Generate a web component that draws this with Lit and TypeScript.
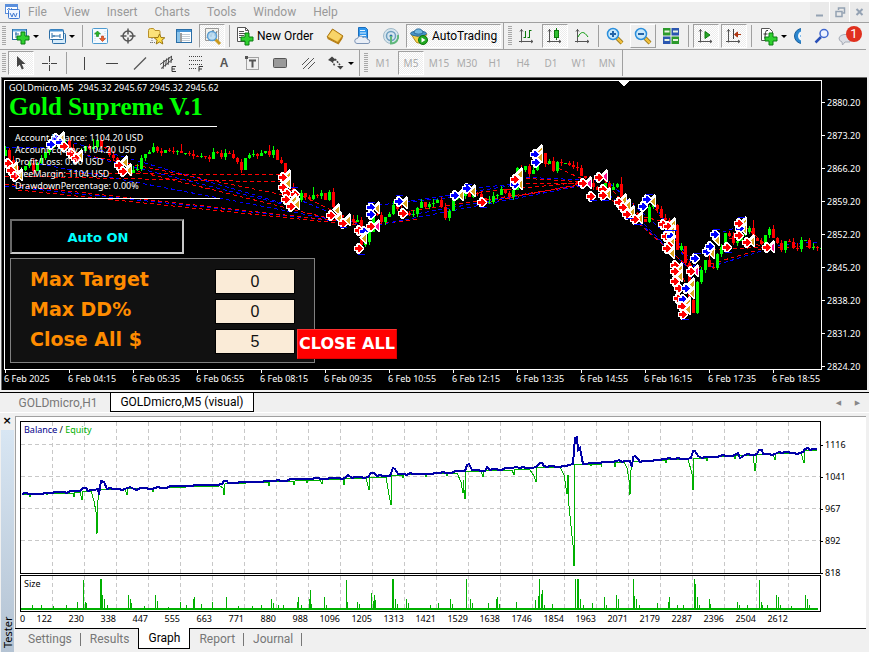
import { LitElement, html, css, svg, nothing, TemplateResult } from "lit";
import { customElement, state } from "lit/decorators.js";
import { classMap } from "lit/directives/class-map.js";

/* ---------- icons: every glyph is drawn in a 20 x 20 box ---------- */

const plus = (x: number, y: number) => svg`
  <path d="M${x + 4} ${y}h4v4h4v4h-4v4h-4v-4h-4v-4h4z" fill="#2fd02f" stroke="#0b7d12" stroke-width="1"/>`;
const axes = svg`<path d="M4.500 3v13.500M2 15.500h14M3 5.500l1.500-2 1.500 2M14 14l2 1.500-2 1.500" fill="none" stroke="#555" />`;
const lens = (sign: string) => svg`
  <path d="M12 12l5 5" stroke="#8a6a10" stroke-width="4"/><path d="M12 12l5 5" stroke="#f0c040" stroke-width="2.500"/>
  <circle cx="8" cy="8" r="5.500" fill="#c9e9fc" stroke="#2b8fdc" stroke-width="1.500"/>
  <path d="${sign}" stroke="#2464a8" stroke-width="2"/>`;

const ICONS: Record<string, TemplateResult> = {
  app: svg`<rect x="3.500" y="2.500" width="12" height="9" fill="#fff" stroke="#5b8fdc"/><path d="M4 4h11" stroke="#5b8fdc" stroke-width="2"/>
    <rect x="6.500" y="7.500" width="11" height="9" rx="1" fill="#eef5ff" stroke="#3f78d0"/><path d="M8 11l2 4 1.500-4 2 4 1.500-4" fill="none" stroke="#3f78d0"/><path d="M5 8l2-2 1 2 2-2" fill="none" stroke="#5b8fdc"/>`,
  newChart: svg`<rect x="1.500" y="3.500" width="14" height="10" fill="#fff" stroke="#2b6ea6"/><path d="M2 4.500h13" stroke="#66aee4" stroke-width="2"/><path d="M4 8h4M5 6v4M4 11h5" stroke="#2b6ea6"/>${plus(6, 6)}`,
  profiles: svg`<rect x="5.500" y="7.500" width="13" height="10" rx="1" fill="#d7ecfb" stroke="#2b6ea6"/><rect x="2.500" y="3.500" width="14" height="10" rx="1" fill="#fff" stroke="#2b6ea6"/><path d="M3 4.500h13" stroke="#4795d6" stroke-width="2"/><path d="M5 7v5M5 10h8M13 8v4M7 9v2" stroke="#2b6ea6"/>`,
  market: svg`<rect x="2.500" y="2.500" width="15" height="15" rx="1" fill="#f4faff" stroke="#4c9ad0"/><path d="M5 6v9M15 5v9" stroke="#c9d8e4" stroke-dasharray="1 1"/><path d="M7.500 5l3 3h-2v2.500h-2v-2.500h-2z" fill="#27b527" stroke="#0b7d12" stroke-width=".6"/><path d="M12.500 15.500l3-3h-2v-2.500h-2v2.500h-2z" fill="#f0602a" stroke="#b03510" stroke-width=".6"/>`,
  cross: svg`<circle cx="10" cy="10" r="5" fill="none" stroke="#555" stroke-width="1.500"/><path d="M10 2.500v6M10 11.500v6M2.500 10h6M11.500 10h6" stroke="#555" stroke-width="1.500"/>`,
  navigator: svg`<path d="M2.500 4.500q0-2 2-2h3l1.500 2h4q1 0 1 1v6h-11.500z" fill="#fbe27a" stroke="#b8902a"/><path d="M6 12v5M4 16.500h5" stroke="#777" stroke-dasharray="1 1"/><path d="M13.500 8l1.500 3.500 3.800.3-2.900 2.400.9 3.800-3.300-2-3.300 2 .9-3.800-2.900-2.400 3.800-.3z" fill="#ffdf4a" stroke="#9a7510"/>`,
  terminal: svg`<rect x="2.500" y="3.500" width="15" height="13" fill="#fff" stroke="#2b6ea6"/><path d="M3 5h14" stroke="#4795d6" stroke-width="2"/><path d="M4.500 6v10" stroke="#8cc4ea" stroke-width="3"/><path d="M8 8.500h8M8 10.500h8M8 12.500h8M8 14.500h8" stroke="#c3ccd4"/><path d="M7 7v9" stroke="#3c3c3c"/>`,
  tester: svg`<path d="M3.500 2.500h13v12h-13z" fill="#f3f3ee" stroke="#999"/><path d="M5 12l2-6 2 5 2-7 2 6 2-5" fill="none" stroke="#777"/><path d="M13 13l5 5" stroke="#c99a20" stroke-width="3"/><circle cx="10" cy="10" r="4.500" fill="#b7dcf4" fill-opacity=".85" stroke="#5b9fd4" stroke-width="1.500"/>`,
  order: svg`<path d="M2.500 1.500h8l3 3v11h-11z" fill="#fff" stroke="#555"/><path d="M10.500 1.500v3h3" fill="none" stroke="#555"/><path d="M4 5.500h5M4 7.500h7M4 9.500h5M4 11.500h4" stroke="#555"/>${plus(6, 7)}`,
  gold: svg`<path d="M2 11l5.500-8 10.500 7-5 7z" fill="#e2a92c" stroke="#a87512"/><path d="M3 10.500l4.800-6.500 9 6-4.500 5.500z" fill="#f8d469"/><path d="M2.500 11.500l10.500 5.500 4.500-6.500v2L13.500 18.500 2.500 13z" fill="#b87f14"/>`,
  cloudDoc: svg`<path d="M5.500 1.500h7l2 2v9h-9z" fill="#2f97ee" stroke="#1b6dbc"/><path d="M7 4.500h5M7 7h6M7 9.500h6" stroke="#e8f5ff"/><path d="M4 17.500a2.500 2.500 0 01.5-5 3 3 0 015.500-1 3 3 0 014.500 2 2 2 0 01.5 4z" fill="#e9eef6" stroke="#7b93b5"/>`,
  signal: svg`<circle cx="10" cy="10" r="7.500" fill="#d7e6ee" stroke="#9fb9c8"/><circle cx="10" cy="10" r="4.500" fill="none" stroke="#6f9fc0" stroke-width="1.500"/><circle cx="10" cy="10" r="1.500" fill="#2a70a8"/><path d="M10 10v7.500c5 0 8-4 7-8.500" fill="none" stroke="#5fb77b" stroke-width="2"/>`,
  auto: svg`<path d="M2 8l8 3 8-3-6 9.500-4.500-1z" fill="#f8d24c" stroke="#b08a1a"/><ellipse cx="9.500" cy="7.500" rx="8" ry="2.500" fill="#4a95c8" stroke="#2c6c9c"/><path d="M5 7c0-5.500 9-5.500 9 0-2 1.500-7 1.500-9 0z" fill="#74b9e0" stroke="#2c6c9c"/><circle cx="14" cy="14" r="4.500" fill="#22a822" stroke="#0c760c"/><path d="M12.500 11.500l4 2.500-4 2.500z" fill="#fff"/>`,
  bars: svg`${axes}<path d="M8.500 5v7M6.500 11.500h2M12.500 4v8M12.500 4.500h2M10.500 11.500h2" stroke="#0c7a0c"/>`,
  candles: svg`${axes}<rect x="9.500" y="4.500" width="4" height="7" fill="#2fbf2f" stroke="#0c7a0c"/><path d="M11.500 2v2.500M11.500 12v2" stroke="#0c7a0c"/>`,
  line: svg`${axes}<path d="M5 11c3-6 6-6 10 0" fill="none" stroke="#0c9a0c"/>`,
  zoomIn: svg`${lens("M5 8h6M8 5v6")}`,
  zoomOut: svg`${lens("M5 8h6")}`,
  tile: svg`<path d="M10.500 10.500H18V18h-7.500zM2 2h7.500v7.500H2z" fill="#2c9a2c"/><path d="M10.500 2H18v7.500h-7.500zM2 10.500h7.500V18H2z" fill="#2b56b0"/><path d="M3.500 5.500h5M12 5.500h5M3.500 14h5M12 14h5" stroke="#eaf3e0" stroke-width="2"/>`,
  scroll: svg`${axes}<path d="M9 5.500l5 3.500-5 3.500z" fill="#27a527" stroke="#0c7a0c"/>`,
  shift: svg`${axes}<path d="M9.500 3v10" stroke="#444"/><path d="M17 8.500h-5M13.500 6l-3 2.500 3 2.500z" stroke="#b03510" fill="#b03510"/>`,
  indicator: svg`<path d="M2.500 2.500h8l3 3v9h-11z" fill="#fff" stroke="#555"/><path d="M9 4.500q-2-1-2.500 2l-.8 6M4.500 8h4" fill="none" stroke="#333"/>${plus(6, 7)}`,
  clock: svg`<circle cx="9" cy="10" r="7.500" fill="#2b86cf" stroke="#1b5f9c"/><circle cx="10" cy="10" r="5" fill="#eef6fd"/><path d="M7 10h2" stroke="#2b86cf"/>`,
  search: svg`<path d="M9 11l-5.500 5.500" stroke="#2a50b8" stroke-width="2.500"/><circle cx="12" cy="7.500" r="4" fill="#eef3ff" stroke="#4068d0" stroke-width="1.500"/>`,
  chat: svg`<path d="M3 12a6 4.500 0 015-3.500h6v7.500H9l-2.500 3-.5-3a5 4 0 01-3-4z" fill="#dcdfe5" stroke="#a8adb8"/>`,
  pointer: svg`<path d="M6 3l0 11 2.800-2.300 2 4.800 2-1-2-4.500h3.700z" fill="#444"/>`,
  plusLines: svg`<path d="M10.500 3v6M10.500 12v6M3 10.500h6M12 10.500h6" stroke="#444"/><rect x="10" y="10" width="1" height="1" fill="#444"/>`,
  vline: svg`<path d="M10.500 4v13" stroke="#444"/>`,
  hline: svg`<path d="M4 10.500h12" stroke="#444"/>`,
  tline: svg`<path d="M4 16.500L16 4.500" stroke="#555" stroke-width="1.200"/>`,
  channel: svg`<path d="M2 11.500L14 3M3 15.500L15 6M6 7l-1 9M8.500 5.500l-1 8M11 4l-1 8M13.500 3l-.5 7" stroke="#444" fill="none"/><path d="M18 13.500h-4v5h4M14 16h3" stroke="#333" fill="none"/>`,
  fibo: svg`<path d="M3 3.500h13M3 7.500h13M3 11.500h13M3 15.500h8" stroke="#444" stroke-dasharray="1 1"/><path d="M17 13.500h-4v5M13 16h3" stroke="#333" fill="none"/>`,
  textBox: svg`<rect x="4.500" y="4.500" width="12" height="12" fill="none" stroke="#555" stroke-dasharray="1 1"/><path d="M7 7.500h7M10.500 7.500v7" stroke="#555" stroke-width="2"/><path d="M3 3h3v3H3z" fill="#555"/>`,
  rect: svg`<rect x="3.500" y="5.500" width="13" height="9" rx="1" fill="#999" stroke="#555"/>`,
  hatch: svg`<path d="M4 12l7-7M5 16L16 5M10 16l7-7" stroke="#555"/>`,
  arrows: svg`<path d="M2 7l4-3.500 4 3.500-4 2zM11 13h6.500l-3 3.500z" fill="#444"/><path d="M6 8l3 5M9 6l5 6" stroke="#444" stroke-width="1.500" stroke-dasharray="2 1"/>`,
  minimize: svg`<path d="M6 13.500h7" stroke="#94a2b3" stroke-width="2"/>`,
  restore: svg`<path d="M8.500 8V6h6v5h-2" fill="none" stroke="#94a2b3" stroke-width="1.500"/><path d="M6 9.500h6v5H6z" fill="none" stroke="#94a2b3" stroke-width="1.500"/>`,
  close: svg`<path d="M6.500 7l6 6M12.500 7l-6 6" stroke="#94a2b3" stroke-width="2"/>`,
};

const icon = (name: string) => html`<svg class="icon" viewBox="0 0 20 20" aria-hidden="true">${ICONS[name]}</svg>`;

/* ---------- price history: closing level of each five-minute bar ---------- */

const CLOSES = [
  150, 160, 166, 176, 170, 166, 163, 171, 163, 158, 152, 148, 141, 137, 141, 140, 148, 153, 158, 151, 146, 149, 147, 140,
  147, 148, 155, 158, 168, 172, 168, 173, 170, 169, 158, 154, 152, 147, 151, 153, 150, 151, 152, 151, 153, 153, 154, 156,
  157, 156, 157, 159, 152, 153, 157, 153, 154, 158, 162, 170, 158, 155, 154, 156, 153, 151, 155, 150, 160, 163, 178, 187,
  195, 200, 193, 197, 199, 195, 196, 193, 200, 192, 207, 215, 221, 222, 219, 222, 220, 245, 242, 232, 214, 215, 222, 217,
  214, 205, 209, 214, 213, 215, 214, 208, 202, 207, 204, 203, 200, 207, 218, 211, 199, 195, 196, 193, 197, 193, 194, 198,
  203, 202, 196, 195, 189, 193, 197, 190, 168, 170, 166, 174, 170, 158, 153, 164, 161, 171, 162, 163, 163, 165, 167, 168,
  176, 178, 183, 187, 190, 187, 183, 190, 187, 184, 197, 200, 207, 213, 214, 219, 222, 207, 205, 209, 218, 220, 222, 225,
  250, 246, 263, 300, 313, 282, 270, 260, 267, 268, 254, 247, 233, 236, 243, 241, 235, 232, 228, 238, 241, 244, 235, 229,
  238, 243, 250, 241, 242, 248, 249, 240, 240, 248, 247, 248, 248, 236,
];

/* [kind, x, y]: r/b trade arrows, g/m closing wedges */
type Mark = [string, number, number];
const MARKS: Mark[] = [
  ["g", 14, 168], ["r", 8, 163], ["r", 11, 170], ["g", 19, 175], ["r", 15, 176],
  ["b", 51, 144], ["b", 56, 138], ["g", 61, 138], ["b", 60, 142], ["r", 64, 146], ["r", 71, 153], ["g", 79, 156], ["r", 76, 158],
  ["g", 124, 162], ["r", 119, 165], ["g", 128, 170], ["r", 123, 171],
  ["g", 287, 176], ["g", 287, 183], ["r", 283, 177], ["r", 283, 187], ["r", 287, 193], ["r", 295, 194], ["g", 293, 200], ["r", 286, 199], ["g", 296, 204], ["r", 291, 206],
  ["g", 336, 210], ["g", 338, 218], ["r", 331, 215], ["g", 347, 220], ["r", 343, 223],
  ["g", 376, 208], ["b", 371, 207], ["b", 371, 214], ["m", 376, 226], ["r", 371, 226], ["r", 359, 230], ["b", 364, 231], ["g", 363, 238], ["r", 359, 248],
  ["g", 404, 203], ["b", 399, 201], ["r", 403, 213],
  ["g", 460, 195], ["b", 455, 195], ["g", 472, 191], ["b", 467, 188], ["r", 482, 202],
  ["g", 519, 174], ["g", 519, 184], ["b", 515, 184], ["r", 515, 179], ["g", 539, 151], ["g", 539, 157], ["b", 535, 154], ["b", 536, 162],
  ["m", 588, 183], ["r", 583, 183], ["r", 591, 196], ["m", 604, 176], ["r", 599, 177], ["r", 603, 189], ["g", 607, 194], ["r", 603, 195],
  ["g", 623, 200], ["r", 619, 202], ["g", 627, 205], ["r", 623, 207], ["g", 631, 212], ["r", 627, 214], ["g", 639, 218], ["r", 635, 219],
  ["g", 652, 201], ["b", 647, 199], ["b", 643, 206],
  ["r", 663, 224], ["g", 672, 224], ["r", 668, 226], ["g", 671, 231], ["r", 666, 236], ["b", 671, 236], ["g", 671, 242], ["g", 671, 253], ["r", 669, 245], ["r", 667, 248],
  ["g", 679, 269], ["g", 679, 276], ["r", 675, 265], ["r", 675, 271], ["r", 675, 281],
  ["g", 691, 284], ["g", 691, 293], ["r", 679, 288], ["b", 686, 288], ["r", 678, 298], ["b", 683, 299], ["g", 687, 303], ["g", 687, 309], ["r", 682, 306], ["r", 683, 314],
  ["b", 695, 258], ["m", 695, 271], ["r", 691, 271],
  ["g", 711, 253], ["b", 707, 251], ["b", 710, 246], ["g", 716, 240], ["b", 715, 234], ["r", 727, 247],
  ["g", 743, 223], ["g", 743, 229], ["b", 740, 228], ["r", 739, 223], ["r", 739, 235], ["g", 751, 241], ["r", 747, 242], ["m", 771, 247], ["r", 767, 247],
];

/* [colour, x1, y1, x2, y2]: dashed lines joining each entry to its exit */
type Link = [string, number, number, number, number];
const LINKS: Link[] = [
  ["b", 5, 148, 50, 147], ["r", 52, 173, 281, 175], ["r", 5, 176, 281, 182], ["b", 60, 139, 124, 157], ["b", 124, 157, 289, 205],
  ["r", 80, 154, 289, 196], ["b", 80, 154, 290, 206], ["r", 124, 168, 340, 221], ["b", 40, 164, 345, 222],
  ["b", 5, 186, 355, 223], ["r", 5, 184, 357, 223], ["r", 18, 190, 357, 225], ["r", 290, 190, 360, 224],
  ["b", 290, 196, 362, 226], ["b", 378, 205, 457, 197], ["b", 404, 202, 516, 185], ["r", 378, 224, 420, 219], ["b", 378, 225, 585, 185],
  ["b", 404, 216, 585, 184], ["r", 404, 212, 585, 185], ["r", 472, 193, 585, 182], ["b", 472, 188, 519, 184], ["r", 484, 203, 585, 183],
  ["r", 519, 178, 585, 182], ["r", 519, 183, 585, 184], ["b", 519, 177, 585, 180], ["r", 539, 160, 585, 180], ["b", 589, 184, 604, 175],
  ["r", 604, 180, 636, 218], ["b", 606, 180, 671, 238], ["b", 604, 190, 690, 269], ["r", 607, 196, 692, 270], ["r", 630, 214, 666, 222],
  ["b", 639, 219, 692, 272], ["r", 652, 203, 694, 270], ["b", 655, 206, 695, 268], ["b", 673, 240, 693, 270], ["r", 679, 272, 690, 290],
  ["b", 684, 300, 696, 262], ["r", 697, 268, 765, 248], ["b", 697, 271, 768, 249], ["r", 712, 250, 766, 247], ["b", 716, 234, 745, 225],
  ["r", 729, 238, 766, 247], ["r", 745, 226, 768, 247], ["b", 771, 246, 817, 242], ["r", 771, 248, 815, 246],
];

const STOPS: [number, number][] = [
  [291, 187], [368, 202], [396, 195], [358, 254], [465, 184], [480, 207], [590, 200], [602, 200], [626, 218], [634, 224],
  [646, 194], [665, 230], [670, 230], [682, 319], [694, 253], [713, 229], [725, 252], [738, 217], [340, 227],
];

const INK: Record<string, string> = { r: "#f00", b: "#00f", g: "#daa520", m: "#ff1493" };

function candle(i: number) {
  const x = 5 + i * 4;
  const open = i ? CLOSES[i - 1] : 156;
  const close = CLOSES[i];
  const top = Math.min(open, close);
  const height = Math.max(1, Math.abs(open - close));
  const colour = close <= open ? "#0f0" : "#f00";
  const up = (i * 7) % 5 + ((i * 3) % 11 === 0 ? 4 : 0);
  const down = (i * 5) % 4;
  return svg`<path d="M${x - 1} ${top}h3v${height}h-3zM${x} ${top - up}h1v${height + up + down}h-1z" fill=${colour} />`;
}

function mark([kind, x, y]: Mark) {
  if (kind === "r" || kind === "b") {
    return svg`
      <path d="M${x - 5} ${y - 2}h2v-2h1v-1h3v1h1v1h1v1h1v1h1v3h-1v1h-1v1h-1v1h-1v1h-3v-1h-1v-2h-2z" fill="#fff" />
      <path d="M${x - 4} ${y - 1}h3v-2h2v1h1v1h1v1h1v1h-1v1h-1v1h-1v1h-2v-2h-3z" fill=${INK[kind]} />`;
  }
  return svg`
    <path d="M${x + 4} ${y - 5}v11h-2v-1h-1v-1h-1v-1h-1v-1h-1v-1h-1v-1h-1v-1h1v-1h1v-1h1v-1h1v-1h1v-1h1v-1z" fill="#fff" />
    <path d="M${x + 3} ${y - 3}v7h-1v-1h-1v-1h-1v-1h-1v-1h1v-1h1v-1h1v-1z" fill=${INK[kind]} />`;
}

/* ---------- strategy tester curves ---------- */

const BALANCE: [number, number][] = [
  [22, 494], [30, 494], [52, 493], [80, 491], [83, 488], [86, 488], [88, 491], [98, 489], [99, 495], [101, 481], [104, 482],
  [107, 489], [125, 489], [130, 487], [134, 489], [155, 488], [180, 486], [208, 485], [222, 484], [224, 481], [227, 481],
  [228, 483], [250, 482], [275, 481], [300, 479], [345, 478], [348, 475], [352, 478], [368, 477], [371, 473], [374, 473],
  [377, 476], [390, 476], [393, 468], [395, 469], [398, 474], [420, 474], [440, 473], [465, 471], [467, 465], [469, 464],
  [472, 470], [485, 471], [487, 467], [490, 470], [512, 468], [516, 467], [520, 468], [536, 467], [540, 463], [542, 463],
  [544, 466], [560, 467], [573, 464], [574, 451], [575, 438], [577, 437], [578, 450], [580, 448], [583, 464], [590, 463],
  [600, 463], [617, 461], [619, 460], [622, 462], [630, 461], [632, 467], [633, 457], [635, 456], [638, 459], [640, 462],
  [660, 460], [669, 458], [675, 459], [691, 458], [693, 451], [695, 451], [698, 456], [702, 458], [720, 456], [735, 455],
  [738, 453], [740, 458], [745, 455], [757, 454], [759, 450], [762, 450], [763, 454], [775, 454], [779, 452], [800, 453],
  [803, 452], [805, 449], [808, 448], [810, 450], [817, 449],
];

const EQUITY = `M22 495L29 494 30 497 31 494 46 493 47 495 48 493 66 493 73 493 74 497 75 492 80 492 82 500 83 491 91 491 94 501
 96 512 97 534 98 500 99 490 125 489 127 495 128 489 152 488 153 492 154 488 220 486 223 488 224 495 225 484 268 482 269 486
 270 482 293 481 294 485 295 481 306 480 307 483 308 480 320 480 322 484 323 479 343 479 344 485 345 479 366 478 369 490 370 477
 386 477 389 495 391 505 391 476 402 475 403 478 404 475 425 474 426 477 427 474 446 473 447 476 448 473 457 473 461 482 463 493
 463 480 465 499 465 472 481 471 483 477 484 471 512 470 514 475 515 469 530 470 534 476 536 482 536 467 560 467 564 475 567 494
 568 475 569 506 571 526 573 545 574 566 574 464 590 464 591 466 592 464 601 464 601 467 602 463 614 462 615 467 616 462 624 462
 627 468 629 480 630 495 631 470 632 462 665 460 666 463 667 460 688 459 692 474 693 490 694 458 706 458 707 461 708 457 734 456
 735 459 736 456 753 455 755 471 757 455 773 454 775 460 776 454 801 453 804 463 805 451 817 450`;

const SIZES: [number, number][] = [
  [32, 4], [41, 4], [53, 3], [66, 4], [77, 7], [83, 29], [85, 7], [86, 6], [100, 30], [101, 30], [102, 14], [104, 10], [107, 4],
  [128, 14], [130, 10], [131, 6], [144, 3], [155, 14], [157, 8], [168, 2], [180, 7], [186, 4], [193, 10], [194, 12], [201, 5],
  [212, 7], [226, 12], [238, 3], [252, 3], [261, 4], [271, 10], [273, 6], [278, 4], [283, 4], [297, 7], [298, 12], [301, 4],
  [309, 10], [310, 19], [311, 5], [324, 12], [326, 4], [346, 29], [347, 7], [357, 7], [359, 5], [371, 16], [373, 8], [374, 14],
  [375, 9], [392, 30], [393, 30], [395, 10], [397, 5], [406, 10], [408, 6], [430, 4], [438, 6], [450, 10], [452, 5], [466, 30],
  [470, 10], [472, 6], [488, 6], [496, 10], [497, 12], [499, 5], [516, 7], [535, 9], [538, 13], [539, 30], [541, 15], [542, 19],
  [544, 4], [552, 5], [575, 30], [577, 30], [578, 30], [580, 10], [583, 4], [592, 6], [604, 12], [606, 4], [616, 14], [618, 10],
  [633, 30], [634, 13], [636, 10], [639, 4], [657, 6], [668, 7], [669, 12], [677, 4], [683, 4], [694, 30], [695, 25], [697, 12],
  [699, 4], [709, 10], [710, 5], [737, 7], [739, 4], [747, 4], [759, 29], [761, 7], [762, 4], [767, 4], [776, 14], [778, 12],
  [780, 4], [791, 3], [805, 14], [807, 10], [809, 4],
];

function balancePath(): string {
  let d = `M${BALANCE[0][0]} ${BALANCE[0][1]}`;
  for (let i = 1; i < BALANCE.length; i++) {
    const [x0, y0] = BALANCE[i - 1];
    const [x1, y1] = BALANCE[i];
    for (let x = x0 + 3; x < x1 - 2; x += 3) {
      const y = y0 + ((y1 - y0) * (x - x0)) / (x1 - x0);
      d += `L${x} ${Math.round(y + (((x * 7) % 5) - 2) / 3)}`;
    }
    d += `L${x1} ${y1}`;
  }
  return d;
}

const COLUMNS = Array.from({ length: 24 }, (_, i) => 52 + i * 32);
const PRICES = ["2880.20", "2873.20", "2866.20", "2859.20", "2852.20", "2845.20", "2838.20", "2831.20", "2824.20"];
const TIMES = ["2025", "04:15", "05:35", "06:55", "08:15", "09:35", "10:55", "12:15", "13:35", "14:55", "16:15", "17:35", "18:55"];
const TRADES = [122, 230, 338, 447, 555, 663, 771, 880, 988, 1096, 1205, 1313, 1421, 1529, 1638, 1746, 1854, 1963, 2071, 2179, 2287, 2396, 2504, 2612];
const LEVELS = [1116, 1041, 967, 892, 818];

@customElement("app-root")
export class AppRoot extends LitElement {
  @state() private testerTab = "Graph";
  @state() private period = "M5";

  static styles = css`
    :host {
      --ui: "Roboto", "Noto Sans", sans-serif;
      --small: "Noto Sans", "Open Sans", sans-serif;
      display: flex;
      flex-direction: column;
      min-height: 100vh;
      background: #f0f0f0;
      color: #000;
      font: 12px/16px var(--ui);
      overflow: hidden;
    }
    * { box-sizing: border-box; }
    button, input { font: inherit; color: inherit; margin: 0; padding: 0; border: 0; border-radius: 0; background: none; }
    h1, p, ul { margin: 0; padding: 0; }
    .icon { width: 20px; height: 20px; flex: none; display: block; }

    .menubar { display: flex; align-items: center; height: 23px; border-top: 2px solid #fff; border-bottom: 1px solid #a0a0a0; }
    .menubar > .icon { margin-left: 2px; }
    .menus { display: flex; gap: 17px; margin-left: 6px; flex: 1; color: #999; }
    .window { display: flex; gap: 1px; background: #fff; height: 20px; }
    .window button { width: 19px; background: #eaeaea; }

    .toolbar { display: flex; align-items: center; height: 27px; margin-right: 3px; border-bottom: 1px solid #a0a0a0; }
    .toolbar.second { height: 26px; border-bottom: 0; }
    .grip { width: 4px; height: 20px; margin: 0 1px 0 2px; background: repeating-linear-gradient(#a8a8a8 0 1px, #f0f0f0 1px 2px); }
    .sep { width: 1px; height: 22px; margin: 0 3px; background: #a0a0a0; }
    .sep.tight { margin: 0 2px 0 1px; }
    .tall { height: 26px; }
    .tool { display: flex; align-items: center; justify-content: center; width: 26px; height: 24px; margin: 0 1px; border: 1px solid transparent; white-space: nowrap; }
    .tool.drop { width: 36px; margin: 0; gap: 2px; }
    .tool.drop::after { content: ""; border: 3px solid transparent; border-top-color: #000; border-bottom: 0; }
    .tool.on { border-color: #a0a0a0 #fff #fff #a0a0a0; background: repeating-conic-gradient(#fff 0 25%, #ececec 0 50%) 0 0 / 2px 2px; }
    .tool.raised { border-color: #fff #a0a0a0 #a0a0a0 #fff; }
    .tool.wide { width: 86px; justify-content: flex-start; gap: 2px; }
    .tool.auto { width: 95px; gap: 3px; justify-content: flex-start; padding-left: 2px; }
    .tool.cut { width: 10px; overflow: hidden; justify-content: flex-start; }
    .tool.letter { font: bold 12px/16px "Liberation Sans", sans-serif; color: #555; }
    .tool.period { font: 10px/12px var(--small); color: #aaa; }
    .right { display: flex; margin-left: auto; }
    .alerts { position: relative; width: 30px; height: 24px; }
    .alerts .badge { position: absolute; right: 4px; top: 2px; width: 16px; height: 16px; border-radius: 8px; background: #e0301e; color: #fff; font: 13px/16px var(--ui); text-align: center; }

    .chart { flex: 1; display: grid; grid-template-columns: 1fr 45px; grid-template-rows: 1fr 20px; margin: 1px 2px 0 1px; padding: 2px 0 0 2px; border: solid #696969; border-width: 1px 0 0 1px; background: #000; color: #fff; font: 9px/12px var(--small); min-height: 312px; }
    .plot { position: relative; border: 1px solid #fff; min-width: 0; }
    .plot > svg { position: absolute; inset: 0; width: 100%; height: 100%; }
    .prices { grid-row: 1 / 3; grid-column: 2; padding-top: 6px; list-style: none; }
    .prices li { display: flex; align-items: center; gap: 2px; height: 33px; }
    .prices li::before { content: ""; width: 3px; height: 1px; background: #fff; }
    .times { display: flex; list-style: none; overflow: hidden; }
    .times li { flex: 1 0 64px; max-width: 64px; white-space: nowrap; }
    .times li::before { content: ""; display: block; width: 1px; height: 3px; margin-left: 1px; background: #fff; }

    .overlay { position: relative; display: flex; flex-direction: column; align-items: flex-start; padding: 1px 0 0 4px; }
    .quote { white-space: pre; }
    .overlay h1 { font: bold 25px/26px "Liberation Serif", serif; color: #0f0; }
    .rule { width: 208px; height: 1px; margin: 6px 0 5px; background: #fff; }
    .rule.end { width: 211px; margin: 6px 0 20px; }
    .account { padding-left: 6px; list-style: none; }
    .switch { width: 174px; height: 35px; margin-left: 1px; padding: 2px 0 0 2px; border: 2px solid; border-color: #696969 #c8c8c8 #c8c8c8 #696969; background: #000; color: #0ff; font: bold 13px/20px "DejaVu Sans", sans-serif; }
    .limits { display: flex; flex-direction: column; gap: 5px; width: 305px; height: 105px; margin: 4px 0 0 1px; padding: 10px 19px; border: 1px solid #808080; background: #111; }
    .limit { display: flex; align-items: flex-start; position: relative; }
    .limit label { width: 185px; color: #ff8c00; font: bold 19px/20px "DejaVu Sans", sans-serif; }
    .limit input { width: 80px; height: 25px; border: 1px solid #000; background: #faebd7; color: #111; font: 16px/20px "Liberation Sans", sans-serif; text-align: center; }
    .closeall { position: absolute; left: 267px; top: 0; width: 100px; height: 30px; border: 1px solid; border-color: #ff3030 #d80000 #d80000 #ff3030; background: #f00; color: #fff; font: bold 16px/20px "DejaVu Sans", sans-serif; white-space: nowrap; }

    .tabs { display: flex; align-items: stretch; height: 21px; margin-top: 2px; border-top: 1px solid #000; border-bottom: 1px solid #fff; }
    .tabs button { color: #777; padding: 0 9px; white-space: nowrap; }
    .tabs button.active { color: #000; background: #fff; border: 1px solid #000; border-top: 0; }
    .charts > button:first-child { width: 110px; padding: 0 0 0 6px; }
    .charts > button.active { width: 144px; height: 19px; padding: 0; }
    .pager { display: flex; gap: 10px; margin-left: auto; padding-right: 7px; }
    .pager button { padding: 0; width: 9px; color: #888; font: 7px/16px "DejaVu Sans", sans-serif; }

    .tester { display: flex; height: 239px; padding-top: 3px; }
    .side { display: flex; flex-direction: column; width: 15px; padding-left: 1px; }
    .side button { height: 14px; padding: 0 2px 4px 0; font: bold 11px/10px "DejaVu Sans", sans-serif; text-align: center; }
    .side h2 { flex: 1; display: flex; align-items: center; margin: 0 1px 0 0; padding: 4px 0 0; background: linear-gradient(#b4c3d3, #d8e6f3); font: 11px/13px var(--small); writing-mode: vertical-rl; transform: rotate(180deg); }
    .pane { flex: 1; min-width: 0; display: flex; flex-direction: column; margin-right: 3px; }
    .report { flex: 1; display: grid; grid-template-columns: 1fr 45px; grid-template-rows: 1fr 37px 16px; padding: 4px 0 0 4px; border: solid #a0a0a0; border-width: 1px 0 0 1px; background: #fff; font: 9px/12px var(--small); }
    .box { position: relative; border: 1px solid #000; min-width: 0; }
    .box > svg { position: absolute; inset: 0; width: 100%; height: 100%; }
    .box p { position: relative; padding: 2px 3px; }
    .box.curve { margin-bottom: 1px; }
    .bal { color: #00008b; }
    .eq { color: #00b000; }
    .levels { grid-row: 1 / 4; grid-column: 2; padding-top: 8px; list-style: none; }
    .levels li { display: flex; align-items: center; gap: 2px; height: 32px; }
    .levels li::before { content: ""; width: 2px; height: 1px; background: #000; }
    .trades { display: flex; list-style: none; padding-top: 1px; }
    .trades li { flex: 0 0 32px; text-align: right; }
    .trades li:first-child { display: flex; justify-content: space-between; }
    .sheet { height: 24px; margin: 0; border-bottom: 0; padding-left: 4px; }
    .sheet button { height: 20px; position: relative; }
    .sheet button:not(.active):not(.before)::after { content: ""; position: absolute; right: 0; top: 4px; width: 1px; height: 13px; background: #777; }
    .sheet button.active { margin-top: -1px; height: 21px; width: 52px; padding: 0; }
  `;

  private tool(name: string, label: string, extra = "") {
    return html`<button class="tool ${extra}" aria-label=${label}>${icon(name)}</button>`;
  }

  private renderTools() {
    return html`
      <div class="toolbar" role="toolbar" aria-label="Standard">
        <i class="grip"></i>
        ${this.tool("newChart", "New chart", "drop")}${this.tool("profiles", "Profiles", "drop")}
        <i class="sep"></i>
        ${this.tool("market", "Market watch")}${this.tool("cross", "Data window")}${this.tool("navigator", "Navigator")}
        ${this.tool("terminal", "Terminal")}${this.tool("tester", "Strategy tester", "on")}
        <i class="sep"></i>
        <button class="tool wide">${icon("order")}New Order</button>
        ${this.tool("gold", "MetaEditor")}${this.tool("cloudDoc", "Virtual hosting")}${this.tool("signal", "Signals")}
        <button class="tool on auto">${icon("auto")}AutoTrading</button>
        <i class="sep tight tall"></i><i class="grip"></i>
        ${this.tool("bars", "Bar chart")}${this.tool("candles", "Candlesticks", "on")}${this.tool("line", "Line chart")}
        <i class="sep tight"></i>
        ${this.tool("zoomIn", "Zoom in")}${this.tool("zoomOut", "Zoom out", "raised")}${this.tool("tile", "Tile windows")}
        <i class="sep"></i>
        ${this.tool("scroll", "Auto scroll", "on")}${this.tool("shift", "Chart shift", "on")}
        <i class="sep"></i>
        ${this.tool("indicator", "Indicators", "drop")}${this.tool("clock", "Periods", "cut")}
        <div class="right">
          ${this.tool("search", "Search")}
          <button class="alerts" aria-label="Notifications">${icon("chat")}<span class="badge">1</span></button>
        </div>
      </div>
      <div class="toolbar second" role="toolbar" aria-label="Line studies">
        <i class="grip"></i>
        ${this.tool("pointer", "Cursor", "on")}${this.tool("plusLines", "Crosshair")}
        <i class="sep"></i>
        ${this.tool("vline", "Vertical line")}${this.tool("hline", "Horizontal line")}${this.tool("tline", "Trendline")}
        ${this.tool("channel", "Equidistant channel")}${this.tool("fibo", "Fibonacci retracement")}
        <button class="tool letter">A</button>
        ${this.tool("textBox", "Text label")}${this.tool("rect", "Rectangle")}${this.tool("hatch", "Channel")}
        ${this.tool("arrows", "Arrows", "drop")}
        <i class="sep tight tall"></i><i class="grip"></i>
        ${["M1", "M5", "M15", "M30", "H1", "H4", "D1", "W1", "MN"].map(
          (p) => html`<button class="tool period ${classMap({ on: p === this.period })}" @click=${() => (this.period = p)}>${p}</button>`
        )}
        <i class="sep tight tall"></i>
      </div>`;
  }

  private renderPlot() {
    return html`<div class="plot">
      <svg viewBox="5 81 816 288" preserveAspectRatio="none" shape-rendering="crispEdges" aria-hidden="true">
        ${LINKS.map(([c, x1, y1, x2, y2]) => svg`<line x1=${x1} y1=${y1} x2=${x2} y2=${y2} stroke=${INK[c]} stroke-dasharray="4 3" />`)}
        ${CLOSES.map((_, i) => candle(i))}
        ${MARKS.map(mark)}
        ${STOPS.map(([x, y]) => svg`<path d="M${x} ${y}h7v1h-7z" fill="#00f" />`)}
        <path d="M618 81h11l-5 5h-1z" fill="#fff" />
      </svg>
      <div class="overlay">
        <p class="quote">GOLDmicro,M5  2945.32 2945.67 2945.32 2945.62</p>
        <h1>Gold Supreme V.1</h1>
        <div class="rule"></div>
        <ul class="account">
          <li>Account Balance: 1104.20 USD</li>
          <li>Account Equity: 1104.20 USD</li>
          <li>Profit/Loss: 0.00 USD</li>
          <li>FreeMargin: 1104 USD</li>
          <li>DrawdownPercentage: 0.00%</li>
        </ul>
        <div class="rule end"></div>
        <button class="switch">Auto ON</button>
        <form class="limits" @submit=${(e: Event) => e.preventDefault()}>
          <div class="limit"><label for="target">Max Target</label><input id="target" value="0" /></div>
          <div class="limit"><label for="dd">Max DD%</label><input id="dd" value="0" /></div>
          <div class="limit"><label for="close">Close All $</label><input id="close" value="5" />
            <button class="closeall" type="button">CLOSE ALL</button></div>
        </form>
      </div>
    </div>`;
  }

  private renderTester() {
    return html`<section class="tester">
      <div class="side"><button aria-label="Close tester">×</button><h2>Tester</h2></div>
      <div class="pane">
        <div class="report">
          <div class="box curve">
            <svg viewBox="21 422 799 151" preserveAspectRatio="none" shape-rendering="crispEdges" aria-hidden="true">
              ${COLUMNS.map((x) => svg`<path d="M${x}.5 422v151" stroke="#c8c8c8" stroke-dasharray="4 3" />`)}
              ${[444, 476, 508, 540].map((y) => svg`<path d="M21 ${y}.5h799" stroke="#c8c8c8" stroke-dasharray="4 3" />`)}
              <path d=${EQUITY} fill="none" stroke="#00b000" />
              <path d=${balancePath()} fill="none" stroke="#0000a8" stroke-width="2" />
            </svg>
            <p><span class="bal">Balance</span> / <span class="eq">Equity</span></p>
          </div>
          <div class="box">
            <svg viewBox="21 576 799 35" preserveAspectRatio="none" shape-rendering="crispEdges" aria-hidden="true">
              ${COLUMNS.map((x) => svg`<path d="M${x}.5 576v35" stroke="#c8c8c8" stroke-dasharray="4 3" />`)}
              <path d="M21 608h797v2H21z" fill="#00b000" />
              ${SIZES.map(([x, h]) => svg`<path d="M${x} ${609 - h}h1v${h}h-1z" fill="#00b000" />`)}
            </svg>
            <p>Size</p>
          </div>
          <ul class="trades">${TRADES.map((t, i) => html`<li>${i ? nothing : html`<span>0</span>`}<span>${t}</span></li>`)}</ul>
          <ul class="levels">${LEVELS.map((l) => html`<li>${l}</li>`)}</ul>
        </div>
        <nav class="tabs sheet">
          ${["Settings", "Results", "Graph", "Report", "Journal"].map(
            (t) => html`<button
              class=${classMap({ active: t === this.testerTab, before: t === "Results" })}
              @click=${() => (this.testerTab = t)}>${t}</button>`
          )}
        </nav>
      </div>
    </section>`;
  }

  render() {
    return html`
      <header class="menubar">
        ${icon("app")}
        <nav class="menus">${["File", "View", "Insert", "Charts", "Tools", "Window", "Help"].map((m) => html`<button>${m}</button>`)}</nav>
        <div class="window">
          <button aria-label="Minimize">${icon("minimize")}</button><button aria-label="Restore">${icon("restore")}</button><button aria-label="Close">${icon("close")}</button>
        </div>
      </header>
      ${this.renderTools()}
      <main class="chart">
        ${this.renderPlot()}
        <ul class="prices">${PRICES.map((p) => html`<li>${p}</li>`)}</ul>
        <ul class="times">${TIMES.map((t) => html`<li>6 Feb ${t}</li>`)}</ul>
      </main>
      <nav class="tabs charts">
        <button>GOLDmicro,H1</button><button class="active">GOLDmicro,M5 (visual)</button>
        <div class="pager"><button aria-label="Previous">◀</button><button aria-label="Next">▶</button></div>
      </nav>
      ${this.renderTester()}`;
  }
}
